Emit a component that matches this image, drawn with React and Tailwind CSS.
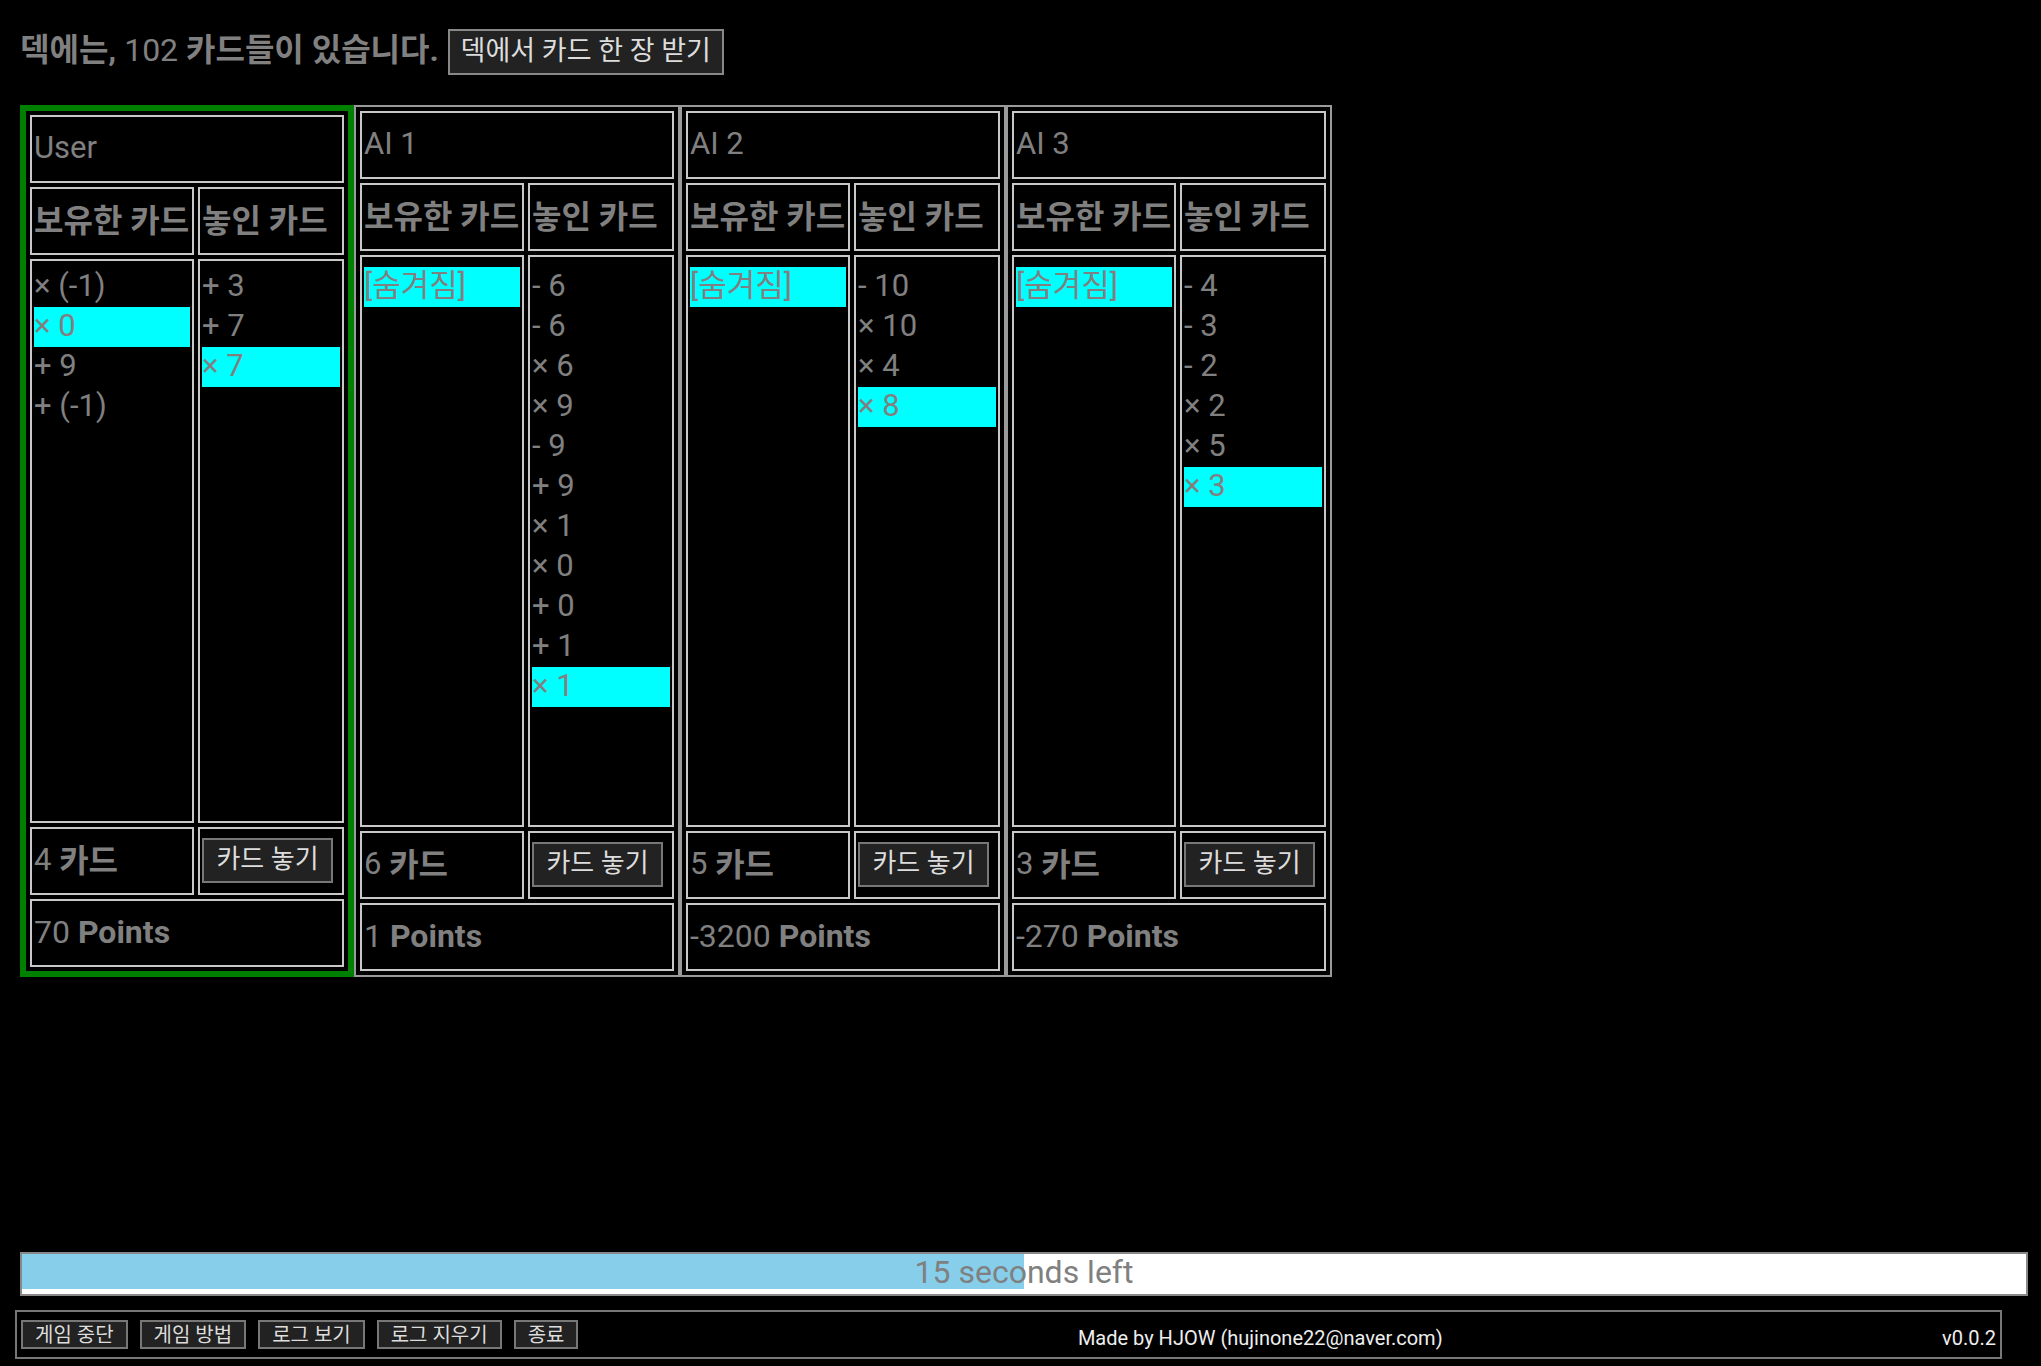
import React from "react";

const players = [
  {
    name: "User",
    user: true,
    held: [
      { t: "× (-1)" },
      { t: "× 0", hi: true },
      { t: "+ 9" },
      { t: "+ (-1)" },
    ],
    placed: [{ t: "+ 3" }, { t: "+ 7" }, { t: "× 7", hi: true }],
    count: "4",
    points: "70",
  },
  {
    name: "AI 1",
    held: [{ t: "[숨겨짐]", hi: true }],
    placed: [
      { t: "- 6" },
      { t: "- 6" },
      { t: "× 6" },
      { t: "× 9" },
      { t: "- 9" },
      { t: "+ 9" },
      { t: "× 1" },
      { t: "× 0" },
      { t: "+ 0" },
      { t: "+ 1" },
      { t: "× 1", hi: true },
    ],
    count: "6",
    points: "1",
  },
  {
    name: "AI 2",
    held: [{ t: "[숨겨짐]", hi: true }],
    placed: [{ t: "- 10" }, { t: "× 10" }, { t: "× 4" }, { t: "× 8", hi: true }],
    count: "5",
    points: "-3200",
  },
  {
    name: "AI 3",
    held: [{ t: "[숨겨짐]", hi: true }],
    placed: [
      { t: "- 4" },
      { t: "- 3" },
      { t: "- 2" },
      { t: "× 2" },
      { t: "× 5" },
      { t: "× 3", hi: true },
    ],
    count: "3",
    points: "-270",
  },
];

function Cell({ className = "", children }) {
  return (
    <div className={"border-2 border-[#c8c8c8] px-[2px] " + className}>{children}</div>
  );
}

function Item({ t, hi }) {
  return (
    <div
      className={
        "h-[40px] leading-[38px] whitespace-nowrap text-[31px] " +
        (hi ? "bg-[#00ffff]" : "")
      }
    >
      {t}
    </div>
  );
}

function Panel({ p }) {
  const outer = p.user
    ? "w-[334px] border-[6px] border-[#008000] p-[4px]"
    : "w-[326px] border-2 border-[#9a9a9a] px-[4px] pt-[4px] pb-[4px]";
  return (
    <div className={"flex flex-col gap-[4px] " + outer}>
      <Cell className="h-[68px] flex items-center text-[31px] pb-[2px]">{p.name}</Cell>
      <div className="flex gap-[4px] h-[68px]">
        <Cell className="w-[164px] flex items-center font-bold text-[32px] whitespace-nowrap overflow-hidden pb-[1px]">
          보유한 카드
        </Cell>
        <Cell className="flex-1 flex items-center font-bold text-[32px] whitespace-nowrap overflow-hidden pb-[1px]">
          놓인 카드
        </Cell>
      </div>
      <div className="flex gap-[4px] flex-1 min-h-0">
        <Cell className={"w-[164px] " + (p.user ? "pt-[6px]" : "pt-[10px]")}>
          {p.held.map((c, i) => (
            <Item key={i} {...c} />
          ))}
        </Cell>
        <Cell className={"flex-1 " + (p.user ? "pt-[6px]" : "pt-[10px]")}>
          {p.placed.map((c, i) => (
            <Item key={i} {...c} />
          ))}
        </Cell>
      </div>
      <div className="flex gap-[4px] h-[68px]">
        <Cell className="w-[164px] flex items-center text-[31px] whitespace-nowrap pb-[1px]">
          {p.count}&nbsp;<b className="font-bold text-[32px]">카드</b>
        </Cell>
        <Cell className="flex-1 flex items-center pb-[2px]">
          <button className="w-[131px] h-[45px] bg-[#222222] border-2 border-[#777777] text-[#dddddd] text-[26px] leading-none whitespace-nowrap pb-[2px]">
            카드 놓기
          </button>
        </Cell>
      </div>
      <Cell className="h-[68px] flex items-center text-[32px] whitespace-nowrap pb-[2px]">
        {p.points}&nbsp;<b className="font-bold">Points</b>
      </Cell>
    </div>
  );
}

export default function App() {
  const btn =
    "h-[29px] px-[12px] bg-[#222222] border-2 border-[#777777] text-[#dddddd] text-[20px] leading-none whitespace-nowrap";
  return (
    <div className="min-h-screen w-full bg-black text-[#808080] font-['Roboto','Noto_Sans_CJK_KR',sans-serif] overflow-hidden">
      <div className="flex items-center pl-[20px] pt-[29px] gap-[9px]">
        <div className="text-[32px] leading-none whitespace-nowrap pb-[4px]">
          <b className="font-bold">덱에는,</b> 102 <b className="font-bold">카드들이 있습니다.</b>
        </div>
        <button className="h-[46px] w-[276px] bg-[#222222] border-2 border-[#888888] text-[#dddddd] text-[27px] leading-none whitespace-nowrap pb-[2px]">
          덱에서 카드 한 장 받기
        </button>
      </div>

      <div className="flex ml-[20px] mt-[30px] h-[872px]">
        {players.map((p, i) => (
          <Panel key={i} p={p} />
        ))}
      </div>

      <div className="relative ml-[20px] mt-[275px] w-[2008px] h-[44px] border-2 border-[#888888] bg-white">
        <div className="h-[35px] w-[50%] bg-[#87ceeb]" />
        <div className="absolute inset-0 flex items-center justify-center text-[32px] text-[#808080] pb-[5px]">
          15 seconds left
        </div>
      </div>

      <div className="ml-[15px] mt-[14px] w-[1987px] h-[49px] border-2 border-[#777777] flex items-center px-[4px]">
        <div className="flex gap-[12px]">
          <button className={btn}>게임 중단</button>
          <button className={btn}>게임 방법</button>
          <button className={btn}>로그 보기</button>
          <button className={btn}>로그 지우기</button>
          <button className={btn}>종료</button>
        </div>
        <div className="flex-1 text-center text-[20px] text-[#eeeeee] pt-[6px]">
          Made by HJOW (hujinone22@naver.com)
        </div>
        <div className="text-[20px] text-[#eeeeee] pt-[6px]">v0.0.2</div>
      </div>
    </div>
  );
}
